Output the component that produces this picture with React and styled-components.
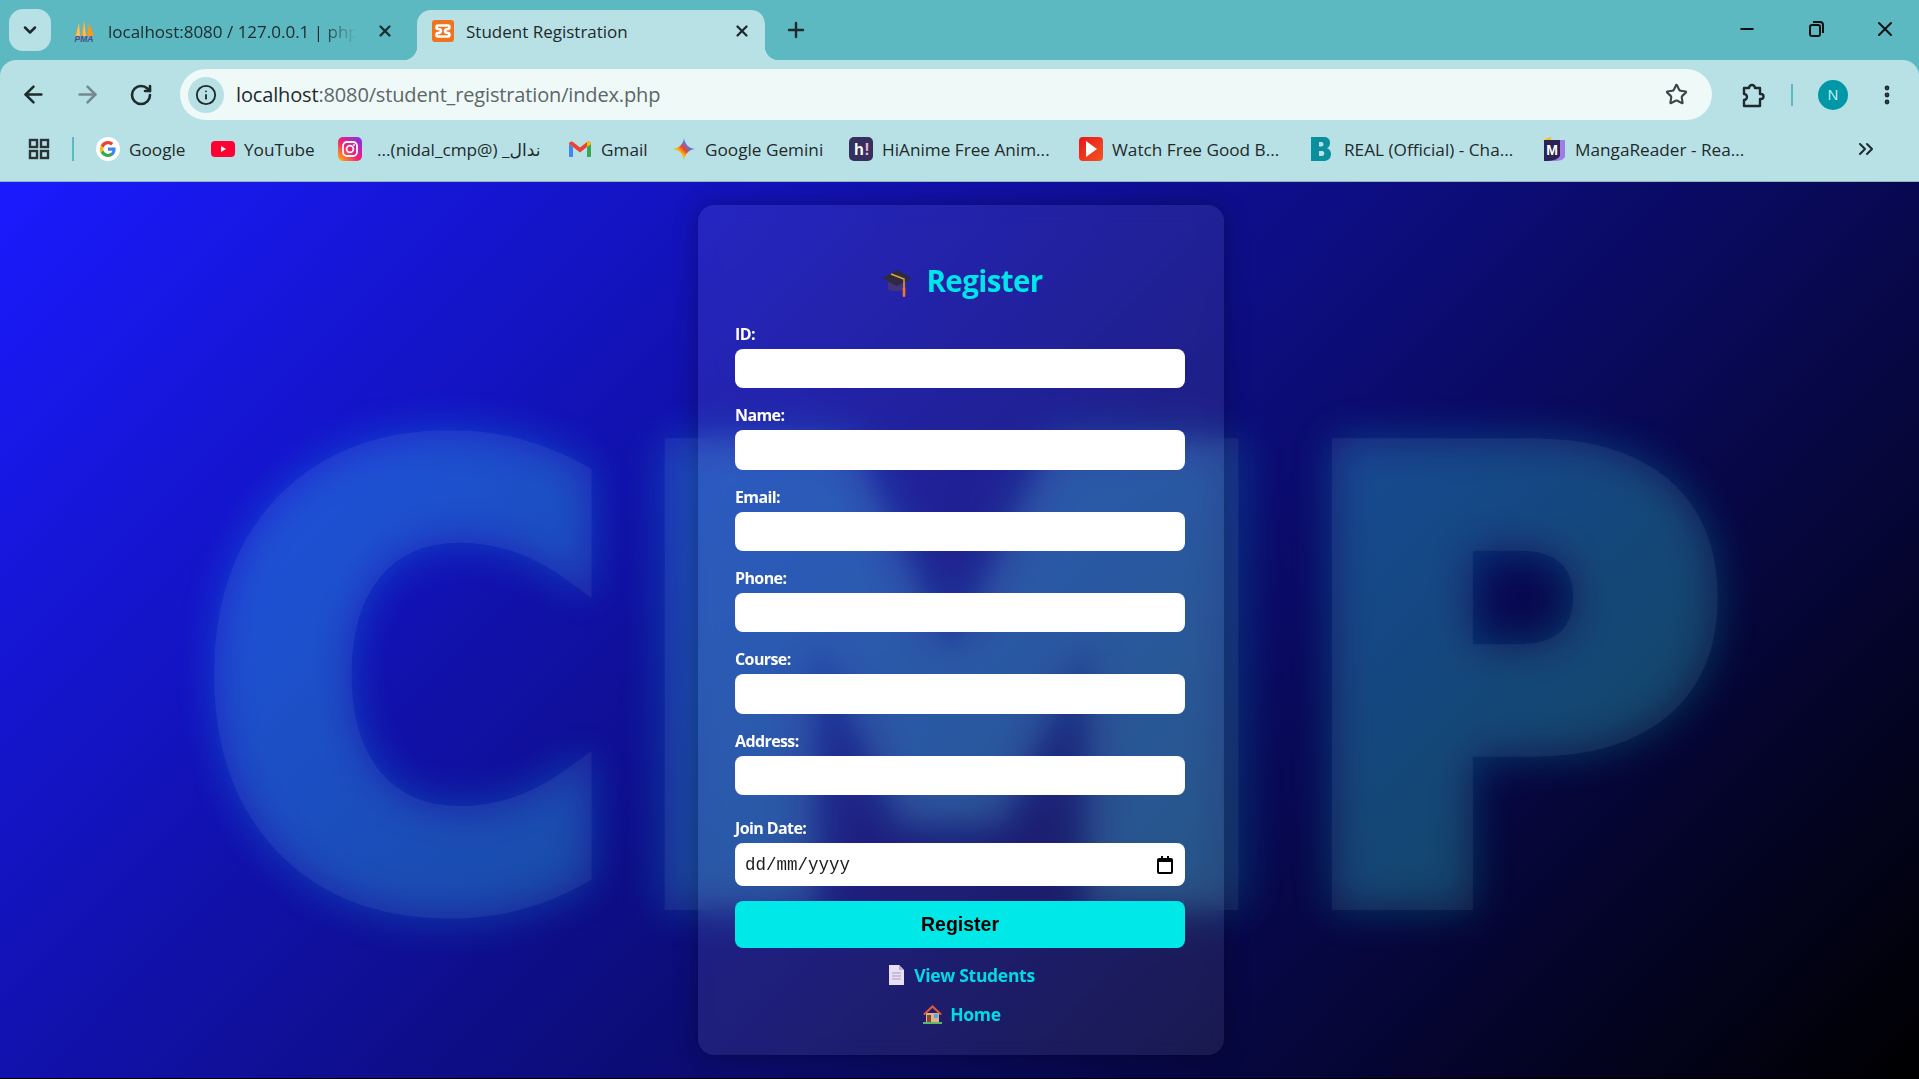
import React from 'react'
import styled, { createGlobalStyle } from 'styled-components'
import { ArrowLeft, ArrowRight, ChevronDown, ChevronsRight, Info, Minus, MoreVertical, Plus, RotateCw, Star, X } from 'lucide-react'

const UI_FONT = '"Open Sans", "Noto Sans", "DejaVu Sans", sans-serif'

const GlobalStyle = createGlobalStyle`
  html, body {
    margin: 0;
    height: 100%;
    overflow: hidden;
    background: #000;
  }
  #root {
    height: 100%;
  }
  * {
    box-sizing: border-box;
  }
`

const Screen = styled.div`
  display: flex;
  flex-direction: column;
  height: 1079px;
  border-bottom: 1px solid #000;
  background: #5cb8c1;
  font-family: ${UI_FONT};
`

/* browser chrome */

const TitleBar = styled.div`
  display: flex;
  align-items: flex-end;
  flex: 0 0 60px;
  padding-left: 9px;
  color: #1f2a2c;
`

const TabSearch = styled.div`
  display: flex;
  align-items: center;
  justify-content: center;
  align-self: flex-start;
  width: 42px;
  height: 42px;
  margin: 9px 9px 0 0;
  border-radius: 14px;
  background: #b8e1e5;
`

const Tab = styled.div`
  position: relative;
  display: flex;
  align-items: center;
  width: ${p => p.$w}px;
  height: 50px;
  padding: 0 ${p => (p.$active ? 14 : 23)}px 8px ${p => (p.$active ? 14 : 12)}px;
  border-radius: 14px 14px 0 0;
  background: ${p => (p.$active ? '#b8e1e5' : 'transparent')};

  ${p => p.$active && `
    &::before, &::after {
      content: '';
      position: absolute;
      bottom: 0;
      width: 14px;
      height: 14px;
    }
    &::before {
      left: -14px;
      background: radial-gradient(circle at 0 0, transparent 14px, #b8e1e5 14.5px);
    }
    &::after {
      right: -14px;
      background: radial-gradient(circle at 100% 0, transparent 14px, #b8e1e5 14.5px);
    }
  `}
`

const TabLabel = styled.span`
  flex: 1;
  margin: 0 ${p => (p.$fade ? 20 : 0)}px 0 ${p => (p.$fade ? 12 : 11)}px;
  overflow: hidden;
  white-space: nowrap;
  font-size: 17px;
  color: #1f2a2c;
  ${p => p.$fade && `
    -webkit-mask-image: linear-gradient(90deg, #000 86%, transparent 100%);
    mask-image: linear-gradient(90deg, #000 86%, transparent 100%);
  `}
`

const NewTab = styled.div`
  display: flex;
  align-items: center;
  justify-content: center;
  width: 30px;
  height: 30px;
  margin: 0 0 15px 16px;
`

const WindowControls = styled.div`
  display: flex;
  align-items: center;
  align-self: flex-start;
  gap: 45px;
  margin: 17px 22px 0 auto;
`

const WindowButton = styled.div`
  display: flex;
  align-items: center;
  justify-content: center;
  width: 24px;
  height: 24px;
`

const Toolbar = styled.div`
  display: flex;
  align-items: center;
  flex: 0 0 68px;
  padding: 1px 18px 0 18px;
  border-radius: 16px 16px 0 0;
  background: #b8e1e5;
  color: #1f2a2c;
`

const NavButton = styled.div`
  display: flex;
  align-items: center;
  justify-content: center;
  width: 30px;
  height: 30px;
  margin-right: 24px;
  color: ${p => (p.$off ? '#73888c' : '#1f2a2c')};
`

const Omnibox = styled.div`
  display: flex;
  align-items: center;
  width: 1532px;
  height: 51px;
  padding: 0 24px 0 8px;
  border-radius: 26px;
  background: #eef9f8;
`

const InfoChip = styled.div`
  display: flex;
  align-items: center;
  justify-content: center;
  width: 36px;
  height: 36px;
  border-radius: 50%;
  background: #b8e1e5;
`

const Url = styled.div`
  flex: 1;
  margin-left: 12px;
  font-size: 20px;
  letter-spacing: -0.15px;
  color: #5b6769;
  white-space: nowrap;

  b {
    font-weight: 400;
    color: #1f2a2c;
  }
`

const ToolGroup = styled.div`
  display: flex;
  align-items: center;
  margin-left: 26px;
`

const ToolDivider = styled.div`
  width: 2px;
  height: 22px;
  margin: 0 25px 0 25px;
  background: #5cb8c1;
`

const Avatar = styled.div`
  display: flex;
  align-items: center;
  justify-content: center;
  width: 30px;
  height: 30px;
  border-radius: 50%;
  background: #0097a7;
  color: #d7f3f5;
  font-size: 14.5px;
`

const Kebab = styled.div`
  display: flex;
  margin-left: 27px;
`

const BookmarkBar = styled.div`
  display: flex;
  align-items: center;
  flex: 0 0 54px;
  padding: 0 0 11px 27px;
  border-bottom: 1px solid #94b6ba;
  background: #b8e1e5;
  color: #1f2a2c;
`

const BookmarkDivider = styled.div`
  width: 2px;
  height: 24px;
  margin: 0 22px 0 21px;
  background: #5cb8c1;
`

const Bookmark = styled.div`
  display: flex;
  align-items: center;
  flex: 0 0 ${p => p.$w}px;
  gap: ${p => p.$gap || 9}px;
  font-size: 17.2px;
  white-space: nowrap;
`

const BookmarkRtl = styled.span`
  direction: rtl;
  unicode-bidi: plaintext;
`

const Overflow = styled.div`
  display: flex;
  margin-left: auto;
  margin-right: 41px;
`

/* page */

const Page = styled.main`
  position: relative;
  display: flex;
  flex: 1;
  align-items: center;
  justify-content: center;
  overflow: hidden;
  background: linear-gradient(135deg, #1a1aff 0%, #000 100%);
`

const Watermark = styled.div`
  position: absolute;
  inset: 0;
  display: flex;
  align-items: center;
  justify-content: center;
  padding-top: 110px;
  user-select: none;
`

const Letter = styled.span`
  position: relative;
  display: block;
  flex: 0 0 ${p => p.$w}px;
  min-width: 0;
  margin-right: ${p => p.$mr || 0}px;
  font-family: "DejaVu Sans", sans-serif;
  font-size: 606px;
  font-weight: 700;
  line-height: 1;
  color: transparent;
  transform: scaleX(${p => p.$sx});
  transform-origin: left center;

  &::before, &::after {
    content: attr(data-glyph);
    position: absolute;
    top: 0;
    left: 0;
    -webkit-text-stroke-width: 30px;
  }
  &::before {
    color: #00ffff;
    -webkit-text-stroke-color: #00ffff;
    opacity: 0.21;
    filter: blur(22px);
  }
  &::after {
    color: #fff;
    -webkit-text-stroke-color: #fff;
    opacity: 0.06;
  }
`

const Card = styled.section`
  position: relative;
  width: 526px;
  margin-left: 3px;
  padding: 37.5px 39px 22px 37px;
  border-radius: 16px;
  background: rgba(255, 255, 255, 0.08);
  box-shadow: 0 0 25px rgba(0, 0, 0, 0.3);
  -webkit-backdrop-filter: blur(10px);
  backdrop-filter: blur(10px);
`

const Title = styled.h2`
  display: flex;
  align-items: center;
  justify-content: center;
  gap: 14px;
  height: 40px;
  margin: 21px 0 20px;
  padding-left: 5px;
  font-size: 29.5px;
  font-weight: 700;
  letter-spacing: -0.6px;
  color: #00e5e8;

  span {
    margin-bottom: 5px;
  }
`

const Field = styled.div`
  margin-top: ${p => p.$mt || 0}px;
  margin-bottom: ${p => (p.$mb === undefined ? 16 : p.$mb)}px;
`

const Label = styled.label`
  display: block;
  height: 22px;
  margin-bottom: 4px;
  font-size: 16px;
  font-weight: 700;
  line-height: 22px;
  letter-spacing: -0.6px;
  color: #fff;
`

const TextInput = styled.input`
  display: block;
  width: 100%;
  height: 39.33px;
  padding: 0 10px;
  border: 0;
  border-radius: 8px;
  background: #fff;
  outline: 0;
`

const DateBox = styled.div`
  display: flex;
  align-items: center;
  justify-content: space-between;
  height: 43px;
  padding: 0 12px 0 10px;
  border-radius: 8px;
  background: #fff;
  font-family: "Liberation Mono", monospace;
  font-size: 17.5px;
  color: #1b1b1b;
`

const SubmitButton = styled.button`
  display: block;
  width: 100%;
  height: 47px;
  border: 0;
  border-radius: 8px;
  background: #00e8e8;
  font-family: "Liberation Sans", sans-serif;
  font-size: 19.5px;
  font-weight: 700;
  color: #000;
`

const LinkRow = styled.div`
  display: flex;
  align-items: center;
  justify-content: center;
  gap: ${p => p.$gap}px;
  height: 39px;
  margin-top: ${p => p.$mt || 0}px;
  padding-left: 4px;
`

const TextLink = styled.a`
  font-size: 17.5px;
  font-weight: 700;
  letter-spacing: -0.3px;
  color: #00dce6;
  text-decoration: none;
`

/* drawn icons */

const PmaIcon = () => (
  <svg width="24" height="24" viewBox="0 0 24 24">
    <path d="M3 17L7 4l1 13zM9 17l3-15 2 15zM15 17l2-13 5 13z" fill="#f79a1e" />
    <path d="M8 17L7 4 4 17zM14 17L12 2l-1 15z" fill="#fbc25e" />
    <text x="12" y="23" textAnchor="middle" fontFamily="Liberation Sans" fontStyle="italic" fontWeight="700" fontSize="8.5" fill="#4a4f86">PMA</text>
  </svg>
)

const XamppIcon = () => (
  <svg width="24" height="24" viewBox="0 0 24 24">
    <rect x="1" y="1" width="22" height="22" rx="3" fill="#f0731f" />
    <path d="M7 6.500h10c2 0 2 3.500 0 3.500-2 0-3 1-3 2s1 2 3 2c2 0 2 3.500 0 3.500H7c-2 0-2-3.500 0-3.500 2 0 3-1 3-2s-1-2-3-2c-2 0-2-3.500 0-3.500z" fill="none" stroke="#fff" strokeWidth="2.600" />
  </svg>
)

const GoogleIcon = () => (
  <svg width="24" height="24" viewBox="0 0 24 24">
    <circle cx="12" cy="12" r="12" fill="#fff" />
    <path d="M19.600 12.200c0-.6 0-1.100-.1-1.600H12v3.100h4.300c-.2 1-.8 1.900-1.600 2.400v2h2.600c1.500-1.400 2.300-3.500 2.300-5.900z" fill="#4285f4" />
    <path d="M12 20c2.200 0 4-.7 5.300-1.900l-2.600-2c-.7.5-1.600.8-2.700.8-2.100 0-3.900-1.400-4.500-3.300H4.800v2.100C6.100 18.300 8.900 20 12 20z" fill="#34a853" />
    <path d="M7.500 13.600c-.3-1-.3-2.100 0-3.100V8.400H4.800c-1.100 2.200-1.100 5 0 7.200z" fill="#fbbc05" />
    <path d="M12 7.200c1.200 0 2.200.4 3 1.200l2.300-2.300C15.900 4.800 14.100 4 12 4 8.900 4 6.100 5.700 4.800 8.400l2.700 2.100c.6-1.900 2.400-3.300 4.500-3.300z" fill="#ea4335" />
  </svg>
)

const YoutubeIcon = () => (
  <svg width="24" height="24" viewBox="0 0 24 24">
    <rect x="0" y="4" width="24" height="16" rx="4" fill="#ff0033" />
    <path d="M10 9l5 3-5 3z" fill="#fff" />
  </svg>
)

const InstagramIcon = () => (
  <svg width="24" height="24" viewBox="0 0 24 24">
    <defs>
      <linearGradient id="igGrad" x1="0" y1="1" x2="1" y2="0">
        <stop offset="0" stopColor="#ffc107" />
        <stop offset="0.45" stopColor="#f5216e" />
        <stop offset="1" stopColor="#7b2ff7" />
      </linearGradient>
    </defs>
    <rect width="24" height="24" rx="5" fill="url(#igGrad)" />
    <rect x="5" y="5" width="14" height="14" rx="4" fill="none" stroke="#fff" strokeWidth="1.800" />
    <circle cx="12" cy="12" r="3.400" fill="none" stroke="#fff" strokeWidth="1.800" />
    <circle cx="16" cy="8" r="1" fill="#fff" />
  </svg>
)

const GmailIcon = () => (
  <svg width="24" height="24" viewBox="0 0 24 24">
    <path d="M1 7v12c0 .6.4 1 1 1h3V10z" fill="#4285f4" />
    <path d="M23 7v12c0 .6-.4 1-1 1h-3V10z" fill="#34a853" />
    <path d="M1 7c0-2.500 2.500-3.200 4-2l7 5.500L19 5c1.500-1.200 4-.5 4 2l-4 3-7 5.500L5 10z" fill="#ea4335" />
    <path d="M19 5c1.500-1.200 4-.5 4 2l-4 3z" fill="#fbbc04" />
  </svg>
)

const GeminiIcon = () => (
  <svg width="24" height="24" viewBox="0 0 24 24">
    <defs>
      <linearGradient id="gemGrad" x1="0" y1="1" x2="1" y2="0">
        <stop offset="0" stopColor="#34a853" />
        <stop offset="0.35" stopColor="#fbbc04" />
        <stop offset="0.5" stopColor="#ea4335" />
        <stop offset="0.7" stopColor="#4285f4" />
        <stop offset="1" stopColor="#4285f4" />
      </linearGradient>
    </defs>
    <path d="M12 1c.8 6 4.500 10 11 11-6.500 1-10.200 5-11 11-.8-6-4.500-10-11-11C7.500 11 11.200 7 12 1z" fill="url(#gemGrad)" />
  </svg>
)

const HiAnimeIcon = () => (
  <svg width="24" height="24" viewBox="0 0 24 24">
    <rect width="24" height="24" rx="5" fill="#36305f" />
    <text x="10" y="18" textAnchor="middle" fontFamily="Liberation Sans" fontWeight="700" fontSize="16" fill="#fff">h</text>
    <text x="18" y="18" textAnchor="middle" fontFamily="Liberation Sans" fontWeight="700" fontSize="16" fill="#f7b4cf">!</text>
  </svg>
)

const WatchIcon = () => (
  <svg width="24" height="24" viewBox="0 0 24 24">
    <defs>
      <linearGradient id="watchGrad" x1="0" y1="0" x2="1" y2="1">
        <stop offset="0" stopColor="#e8141e" />
        <stop offset="1" stopColor="#f5561e" />
      </linearGradient>
    </defs>
    <rect width="24" height="24" rx="4" fill="url(#watchGrad)" />
    <path d="M7 4l11 8-11 8z" fill="#fff" />
  </svg>
)

const RealIcon = () => (
  <svg width="24" height="24" viewBox="0 0 24 24">
    <path fillRule="evenodd" d="M2 0h13c4 0 6 2.500 6 6 0 2.500-1 4.300-3 5.200 2.700.8 4 3 4 5.800 0 4.500-3 7-7.500 7H2zM10 5v4.500h2.500c1.500 0 2-.9 2-2.200S14 5 12.500 5zM10 14v5h3c1.600 0 2.300-1 2.300-2.500S14.600 14 13 14z" fill="#0a8f9f" />
  </svg>
)

const MangaIcon = () => (
  <svg width="24" height="24" viewBox="0 0 24 24">
    <path d="M1 5c1-3 4-4 8-5v4z" fill="#f5c518" />
    <path d="M2 3h21v17c-2 3-6 4-10 4H2z" fill="#a07ce8" />
    <path d="M2 3h16v16c-2 3-6 5-16 5z" fill="#2b2356" />
    <text x="10" y="18" textAnchor="middle" fontFamily="Liberation Sans" fontWeight="700" fontSize="14" fill="#fff">M</text>
  </svg>
)

const AppsIcon = () => (
  <svg width="24" height="24" viewBox="0 0 24 24" fill="none" stroke="#2a3436" strokeWidth="2.400">
    <rect x="3" y="3" width="7" height="7" />
    <rect x="14" y="3" width="7" height="7" />
    <rect x="3" y="14" width="7" height="7" />
    <rect x="14" y="14" width="7" height="7" />
  </svg>
)

const PuzzleIcon = () => (
  <svg width="28" height="28" viewBox="0 0 28 28" fill="none" stroke="#1f2a2c" strokeWidth="2.400" strokeLinejoin="round">
    <path d="M6 7h5a3 3 0 0 1 6 0h5v6h1a2.500 2.500 0 0 1 0 5h-1v7H6v-6a3 3 0 0 0 0-6z" />
  </svg>
)

const RestoreIcon = () => (
  <svg width="20" height="20" viewBox="0 0 20 20" fill="none" stroke="#111" strokeWidth="2">
    <rect x="4" y="6" width="10" height="11" rx="2" />
    <path d="M7 3h7a3 3 0 0 1 3 3v8" />
  </svg>
)

const CalendarIcon = () => (
  <svg width="16" height="18" viewBox="0 0 16 18">
    <path d="M4 0h2v2h4V0h2v2h2a2 2 0 0 1 2 2v12a2 2 0 0 1-2 2H2a2 2 0 0 1-2-2V4a2 2 0 0 1 2-2h2zM2 6v10h12V6z" fill="#000" />
  </svg>
)

const CapEmoji = () => (
  <svg width="30" height="27" viewBox="0 0 30 27">
    <path d="M6 11v8c3 3 15 3 18 0v-8l-9 5z" fill="#43337a" />
    <path d="M0 8L15 0l15 8-15 8z" fill="#2e2b40" />
    <path d="M9 4l13 5v9" fill="none" stroke="#eaa63c" strokeWidth="1.400" />
    <rect x="20.700" y="17" width="2.600" height="10" rx="1.200" fill="#f0742e" />
  </svg>
)

const PageEmoji = () => (
  <svg width="15" height="20" viewBox="0 0 15 20">
    <path d="M0 0h10l5 5v15H0z" fill="#e8e0f2" />
    <path d="M10 0l5 5h-5z" fill="#bcb0d0" />
    <path d="M3 8h9M3 11h9M3 14h9" stroke="#a79bc0" strokeWidth="1" />
  </svg>
)

const HouseEmoji = () => (
  <svg width="19" height="20" viewBox="0 0 19 20">
    <path d="M3 9h13v9H3z" fill="#e2b184" />
    <path d="M0 10L9.500 1 19 10l-1.500 1.300L9.500 4l-8 7.300z" fill="#dd5a3a" />
    <rect x="4" y="11" width="4" height="7" fill="#7a4a35" />
    <rect x="11" y="10" width="4" height="4" fill="#55a6e6" />
    <rect x="0" y="18" width="19" height="2" fill="#5db56e" />
  </svg>
)

const FIELDS = ['ID', 'Name', 'Email', 'Phone', 'Course', 'Address']

const App = () => {
  return (
    <Screen>
      <GlobalStyle />
      <TitleBar>
        <TabSearch><ChevronDown size={20} strokeWidth={3} /></TabSearch>
        <Tab $w={357}>
          <PmaIcon />
          <TabLabel $fade>localhost:8080 / 127.0.0.1 | phpMyAdmin</TabLabel>
          <X size={18} strokeWidth={3} />
        </Tab>
        <Tab $active $w={348}>
          <XamppIcon />
          <TabLabel>Student Registration</TabLabel>
          <X size={18} strokeWidth={3} />
        </Tab>
        <NewTab><Plus size={24} strokeWidth={2.4} /></NewTab>
        <WindowControls>
          <WindowButton><Minus size={20} strokeWidth={2.4} color="#111" /></WindowButton>
          <WindowButton><RestoreIcon /></WindowButton>
          <WindowButton><X size={24} strokeWidth={2} color="#111" /></WindowButton>
        </WindowControls>
      </TitleBar>

      <Toolbar>
        <NavButton><ArrowLeft size={27} strokeWidth={2.2} /></NavButton>
        <NavButton $off><ArrowRight size={27} strokeWidth={2.2} /></NavButton>
        <NavButton><RotateCw size={24} strokeWidth={2.6} /></NavButton>
        <Omnibox>
          <InfoChip><Info size={22} strokeWidth={2} /></InfoChip>
          <Url><b>localhost</b>:8080/student_registration/index.php</Url>
          <Star size={23} strokeWidth={2.2} color="#3a4547" />
        </Omnibox>
        <ToolGroup>
          <PuzzleIcon />
          <ToolDivider />
          <Avatar>N</Avatar>
          <Kebab><MoreVertical size={24} strokeWidth={2.8} /></Kebab>
        </ToolGroup>
      </Toolbar>

      <BookmarkBar>
        <AppsIcon />
        <BookmarkDivider />
        <Bookmark $w={115}><GoogleIcon />Google</Bookmark>
        <Bookmark $w={127}><YoutubeIcon />YouTube</Bookmark>
        <Bookmark $w={230} $gap={15}><InstagramIcon /><BookmarkRtl>ندال_ (@nidal_cmp)...</BookmarkRtl></Bookmark>
        <Bookmark $w={104}><GmailIcon />Gmail</Bookmark>
        <Bookmark $w={177}><GeminiIcon />Google Gemini</Bookmark>
        <Bookmark $w={230}><HiAnimeIcon />HiAnime Free Anim...</Bookmark>
        <Bookmark $w={230}><WatchIcon />Watch Free Good B...</Bookmark>
        <Bookmark $w={233} $gap={11}><RealIcon />REAL (Official) - Cha...</Bookmark>
        <Bookmark $w={230}><MangaIcon />MangaReader - Rea...</Bookmark>
        <Overflow><ChevronsRight size={24} strokeWidth={2} /></Overflow>
      </BookmarkBar>

      <Page>
        <Watermark aria-hidden="true">
          <Letter $w={420} $sx={0.93} data-glyph="C">C</Letter>
          <Letter $w={672} $sx={1.1} data-glyph="M">M</Letter>
          <Letter $w={420} $sx={0.98} $mr={8} data-glyph="P">P</Letter>
        </Watermark>
        <Card>
          <Title><CapEmoji /><span>Register</span></Title>
          {FIELDS.map(name => (
            <Field key={name}>
              <Label>{name}:</Label>
              <TextInput type="text" />
            </Field>
          ))}
          <Field $mt={22.5} $mb={15}>
            <Label>Join Date:</Label>
            <DateBox>dd/mm/yyyy<CalendarIcon /></DateBox>
          </Field>
          <SubmitButton type="button">Register</SubmitButton>
          <LinkRow $gap={10} $mt={7}><PageEmoji /><TextLink href="#">View Students</TextLink></LinkRow>
          <LinkRow $gap={8}><HouseEmoji /><TextLink href="#">Home</TextLink></LinkRow>
        </Card>
      </Page>
    </Screen>
  )
}

export default App
